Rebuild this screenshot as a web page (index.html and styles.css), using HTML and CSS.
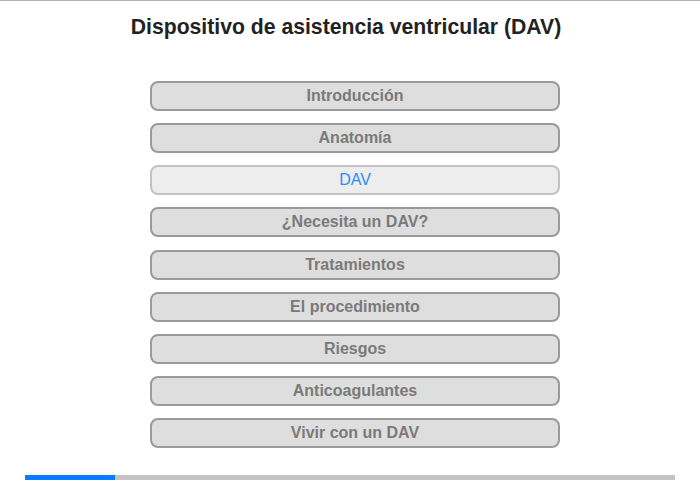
FILE: index.html
```html
<!DOCTYPE html>
<html>
<head>
  <title>Dispositivo de asistencia ventricular (DAV)</title>
  <meta charset="UTF-8" />
  <link rel="stylesheet" href="styles.css">
</head>
<body>
  <div class="page">
    <h1 class="title">Dispositivo de asistencia ventricular (DAV)</h1>

    <ul class="menu">
      <li><button>Introducción</button></li>
      <li><button>Anatomía</button></li>
      <li><button class="active">DAV</button></li>
      <li><button>¿Necesita un DAV?</button></li>
      <li><button>Tratamientos</button></li>
      <li><button>El procedimiento</button></li>
      <li><button>Riesgos</button></li>
      <li><button>Anticoagulantes</button></li>
      <li><button>Vivir con un DAV</button></li>
    </ul>

    <div class="progress">
      <div class="progress-fill" style="width: 13.85%"></div>
    </div>
  </div>
</body>
</html>
```

FILE: styles.css
```css
body {
  margin: 0;
  padding: 0;
  background: #fff;
  font-family: "Liberation Sans", Arial, sans-serif;
}

.page {
  height: 479px;
  border-top: 1px solid #b4b4b4;
  display: flex;
  flex-direction: column;
}

.title {
  margin: 14px 0 0;
  padding-right: 8px;
  font-size: 21.2px;
  line-height: 24px;
  font-weight: bold;
  color: #222;
  text-align: center;
}

/* Chapter menu */
.menu {
  list-style: none;
  margin: 42px 0 0 150px;
  padding: 0;
  width: 410px;
  display: flex;
  flex-direction: column;
  gap: 12.125px;
}

.menu button {
  width: 100%;
  height: 30px;
  background: #dedede;
  border: 2px solid #9a9a9a;
  border-radius: 8px;
  color: #7a7a7a;
  font-family: "Liberation Sans", Arial, sans-serif;
  font-size: 16px;
  font-weight: bold;
  cursor: pointer;
  padding: 0;
}

.menu button.active {
  background: #ededed;
  border-color: #c2c2c2;
  color: #2b8cf8;
  font-weight: normal;
}

/* Progress bar */
.progress {
  margin: auto 25px 0;
  height: 5px;
  background: #c4c4c4;
}

.progress-fill {
  height: 100%;
  background: #0a7cff;
}
```
